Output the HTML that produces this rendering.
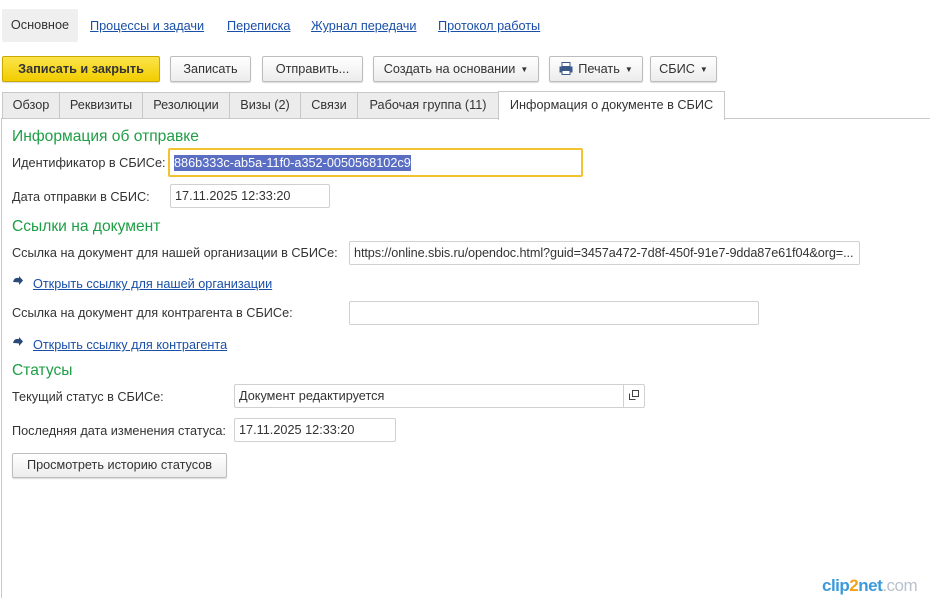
<!DOCTYPE html>
<html><head><meta charset="utf-8"><style>
*{box-sizing:border-box;margin:0;padding:0}
body{width:930px;height:598px;background:#fff;font-family:"Liberation Sans",Arial,sans-serif;font-size:12.7px;color:#333;position:relative;overflow:hidden}
.a{position:absolute;white-space:nowrap}
.lnk{color:#1a4fa8;text-decoration:underline}
.btn{position:absolute;height:26px;border:1px solid #bdbdbd;border-radius:2px;background:linear-gradient(#fff,#ececec);box-shadow:0 1px 1px rgba(0,0,0,.15);text-align:center;line-height:24px;color:#333}
.tab{position:absolute;top:92px;height:27px;border:1px solid #c8c8c8;border-bottom:none;background:#ececec;line-height:25px;text-align:center;color:#333}
.fld{position:absolute;height:24px;border:1px solid #d0d0d0;border-radius:2px;background:#fff;line-height:22px;padding-left:4px;color:#333;overflow:hidden}
.h{position:absolute;left:12px;color:#1e9e45;font-size:15.6px}
.dd{font-size:8px;margin-left:5px;vertical-align:1px}
</style></head><body>
<div class="a" style="left:2px;top:9px;width:76px;height:33px;background:#efefef;border-radius:2px;line-height:33px;text-align:center">Основное</div>
<div class="a lnk" style="left:90px;top:19px">Процессы и задачи</div>
<div class="a lnk" style="left:227px;top:19px">Переписка</div>
<div class="a lnk" style="left:311px;top:19px">Журнал передачи</div>
<div class="a lnk" style="left:438px;top:19px">Протокол работы</div>

<div class="btn" style="left:2px;top:56px;width:158px;background:linear-gradient(#fbe44a,#f2cd00);border-color:#c9a800;font-weight:bold;color:#333">Записать и закрыть</div>
<div class="btn" style="left:170px;top:56px;width:81px">Записать</div>
<div class="btn" style="left:262px;top:56px;width:101px">Отправить...</div>
<div class="btn" style="left:373px;top:56px;width:166px">Создать на основании<span class="dd">▼</span></div>
<div class="btn" style="left:549px;top:56px;width:94px"><svg width="14" height="13" viewBox="0 0 14 13" style="vertical-align:-2px;margin-right:5px"><rect x="3" y="0.5" width="8" height="4" fill="#fff" stroke="#3a5a8a"/><rect x="0.5" y="4.5" width="13" height="6" fill="#3a5a8a"/><rect x="3" y="8.5" width="8" height="4" fill="#fff" stroke="#3a5a8a"/></svg>Печать<span class="dd">▼</span></div>
<div class="btn" style="left:650px;top:56px;width:67px">СБИС<span class="dd">▼</span></div>

<div class="tab" style="left:2px;width:58px">Обзор</div>
<div class="tab" style="left:59px;width:84px">Реквизиты</div>
<div class="tab" style="left:142px;width:88px">Резолюции</div>
<div class="tab" style="left:229px;width:72px">Визы (2)</div>
<div class="tab" style="left:300px;width:58px">Связи</div>
<div class="tab" style="left:357px;width:142px">Рабочая группа (11)</div>
<div class="tab" style="left:498px;width:227px;top:91px;height:29px;background:#fff;z-index:2;line-height:27px">Информация о документе в СБИС</div>
<div class="a" style="left:1px;top:118px;width:929px;height:480px;border-left:1px solid #c8c8c8;border-top:1px solid #c8c8c8"></div>

<div class="h" style="top:128px">Информация об отправке</div>
<div class="a" style="left:12px;top:156px">Идентификатор в СБИСе:</div>
<div class="a" style="left:168px;top:148px;width:415px;height:29px;border:2px solid #f2c230;border-radius:2px"></div>
<div class="a" style="left:174px;top:155px;height:16px;background:#5a6ec4;color:#fff;line-height:16px">886b333c-ab5a-11f0-a352-0050568102c9</div>

<div class="a" style="left:12px;top:190px">Дата отправки в СБИС:</div>
<div class="fld" style="left:170px;top:184px;width:160px">17.11.2025 12:33:20</div>

<div class="h" style="top:218px">Ссылки на документ</div>
<div class="a" style="left:12px;top:246px">Ссылка на документ для нашей организации в СБИСе:</div>
<div class="fld" style="left:349px;top:241px;width:511px;letter-spacing:-0.1px">https://online.sbis.ru/opendoc.html?guid=3457a472-7d8f-450f-91e7-9dda87e61f04&amp;org=...</div>

<svg class="a" style="left:12px;top:276px" width="12" height="12" viewBox="0 0 12 12"><path d="M1 6 Q2 1 7 2 L7 0 L11 4.5 L7 9 L7 6.5 Q3 6 1 6 Z" fill="#2a4a7a"/></svg>
<div class="a lnk" style="left:33px;top:277px">Открыть ссылку для нашей организации</div>

<div class="a" style="left:12px;top:306px">Ссылка на документ для контрагента в СБИСе:</div>
<div class="fld" style="left:349px;top:301px;width:410px"></div>

<svg class="a" style="left:12px;top:337px" width="12" height="12" viewBox="0 0 12 12"><path d="M1 6 Q2 1 7 2 L7 0 L11 4.5 L7 9 L7 6.5 Q3 6 1 6 Z" fill="#2a4a7a"/></svg>
<div class="a lnk" style="left:33px;top:338px">Открыть ссылку для контрагента</div>

<div class="h" style="top:362px">Статусы</div>
<div class="a" style="left:12px;top:390px">Текущий статус в СБИСе:</div>
<div class="fld" style="left:234px;top:384px;width:411px">Документ редактируется</div>
<div class="a" style="left:623px;top:385px;width:1px;height:22px;background:#d0d0d0"></div>
<svg class="a" style="left:629px;top:390px" width="10" height="10" viewBox="0 0 10 10"><rect x="3.5" y="0.5" width="6" height="6" fill="none" stroke="#444"/><path d="M0.5 3.5 V9.5 H6.5" fill="none" stroke="#444"/></svg>

<div class="a" style="left:12px;top:424px">Последняя дата изменения статуса:</div>
<div class="fld" style="left:234px;top:418px;width:162px">17.11.2025 12:33:20</div>

<div class="btn" style="left:12px;top:453px;width:215px;height:25px;line-height:23px">Просмотреть историю статусов</div>

<div class="a" style="left:822px;top:576px;font-size:17px;font-weight:bold;letter-spacing:-0.5px"><span style="color:#3b9ad9">clip</span><span style="color:#f2a31b">2</span><span style="color:#3b9ad9">net</span><span style="color:#b8c2cc;font-weight:normal">.com</span></div>
</body></html>
